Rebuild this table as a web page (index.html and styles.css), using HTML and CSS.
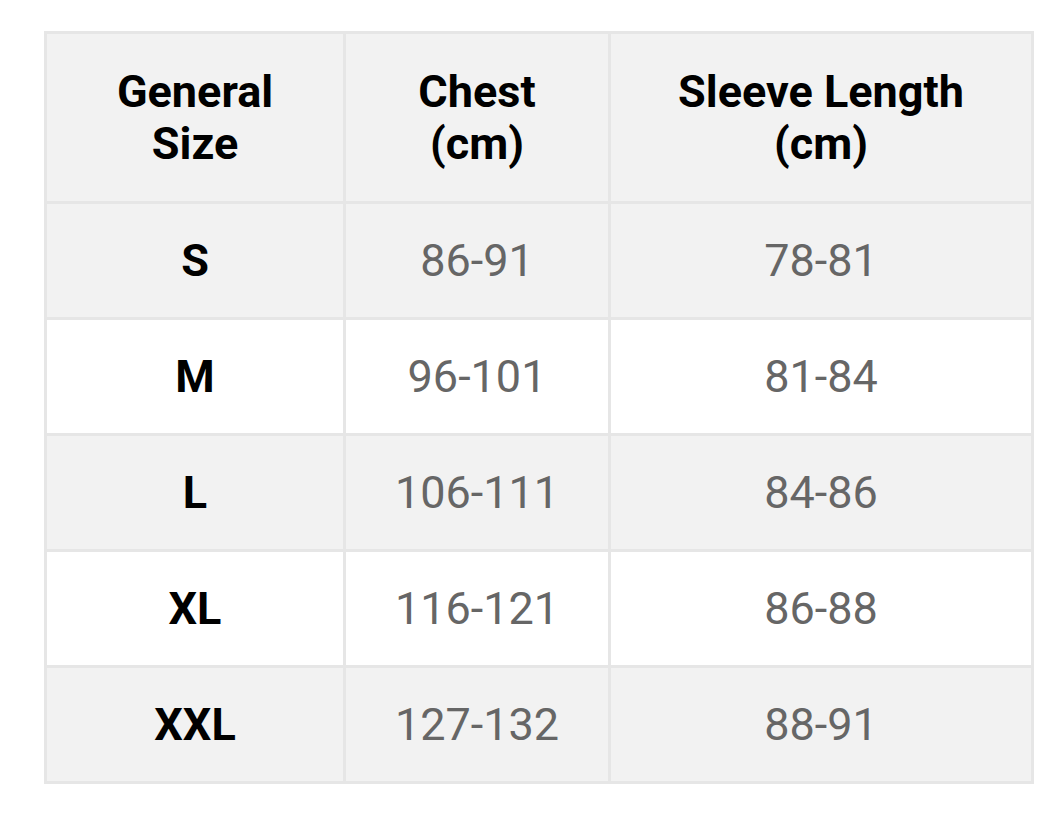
FILE: index.html
```html
<!DOCTYPE html>
<html>
<head>
<meta charset="utf-8">
<link rel="stylesheet" href="styles.css">
</head>
<body>
<table class="sizes">
  <colgroup>
    <col class="c1"><col class="c2"><col class="c3">
  </colgroup>
  <thead>
    <tr class="head"><th>General<br>Size</th><th>Chest<br>(cm)</th><th>Sleeve Length<br>(cm)</th></tr>
  </thead>
  <tbody>
    <tr class="odd"><th>S</th><td>86-91</td><td>78-81</td></tr>
    <tr class="even"><th>M</th><td>96-101</td><td>81-84</td></tr>
    <tr class="odd"><th>L</th><td>106-111</td><td>84-86</td></tr>
    <tr class="even"><th>XL</th><td>116-121</td><td>86-88</td></tr>
    <tr class="odd"><th>XXL</th><td>127-132</td><td>88-91</td></tr>
  </tbody>
</table>
</body>
</html>
```
FILE: styles.css
```css
html, body { margin: 0; padding: 0; background: #ffffff; }
body { padding: 31px 0 0 44px; font-family: Roboto, "Noto Sans", sans-serif; }
.sizes {
  border-collapse: collapse;
  table-layout: fixed;
  width: 987px;
}
.c1 { width: 299px; }
.c2 { width: 265px; }
.c3 { width: 423px; }
.sizes th, .sizes td {
  border: 3px solid #e6e6e6;
  text-align: center;
  vertical-align: middle;
  padding: 0;
  font-size: 45px;
  line-height: 52px;
}
.sizes th { font-weight: 700; color: #000; }
.sizes td { font-weight: 400; color: #666666; }
.head { height: 170px; background: #f2f2f2; }
.odd { height: 116px; background: #f2f2f2; }
.even { height: 116px; background: #ffffff; }
```
